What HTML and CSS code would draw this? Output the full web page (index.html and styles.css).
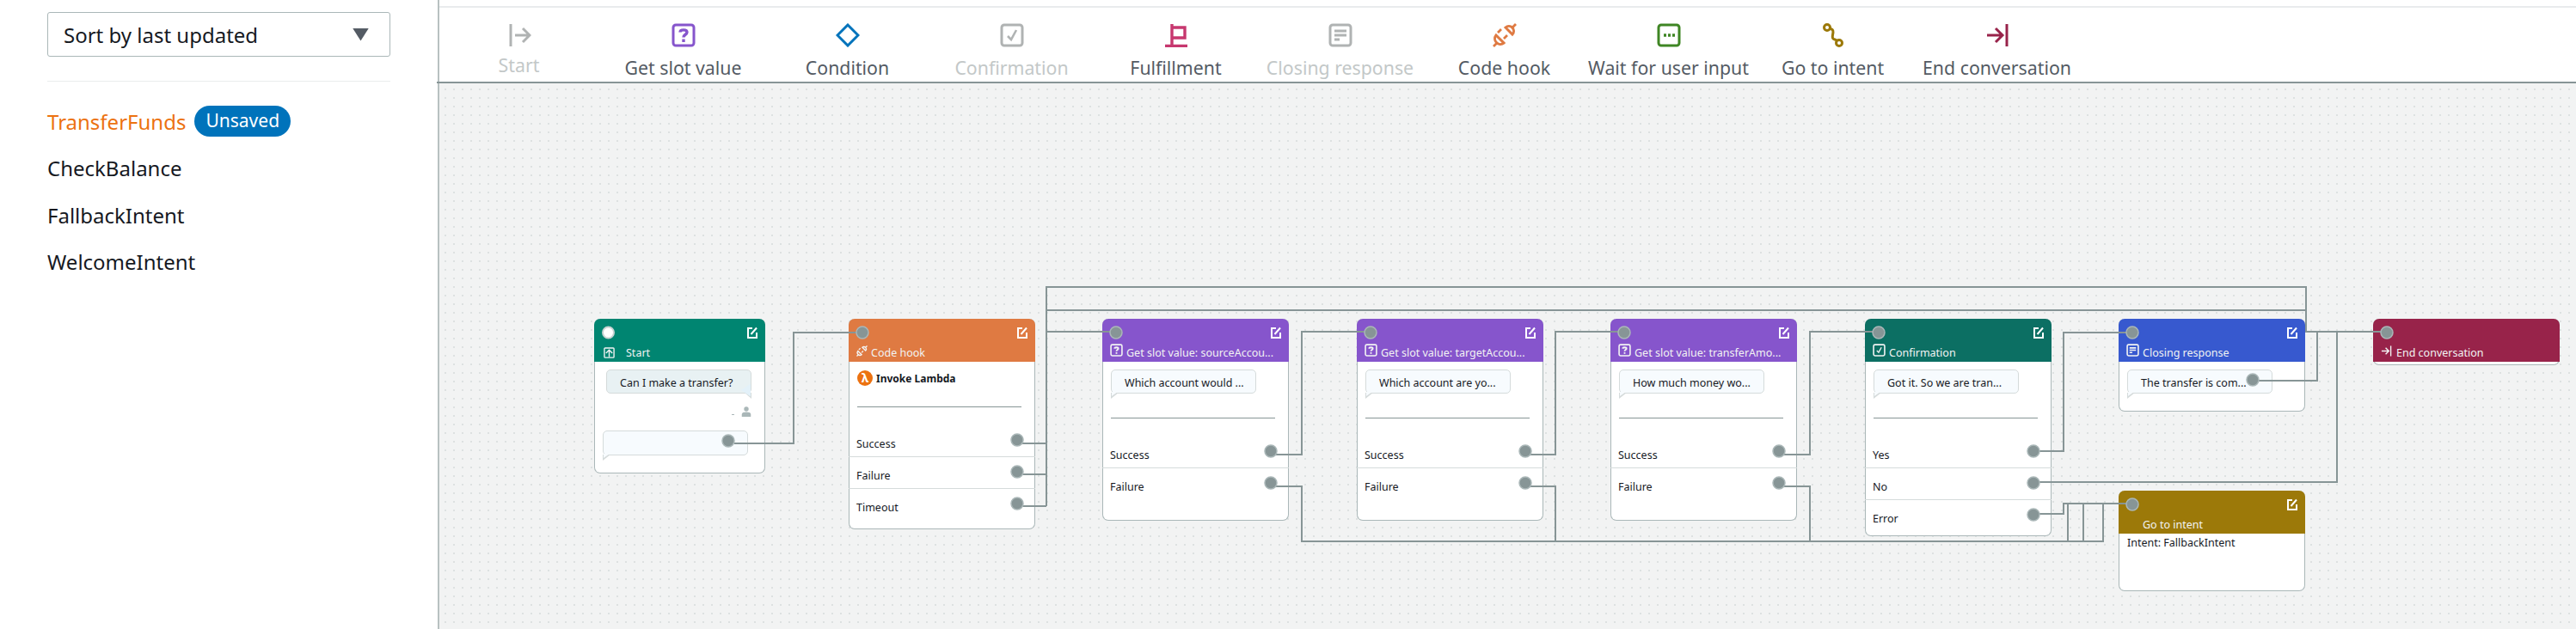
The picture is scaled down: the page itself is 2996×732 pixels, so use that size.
FILE: index.html
```html
<!DOCTYPE html>
<html lang="en">
<head>
  <meta charset="UTF-8">
  <title>Conversation flow: TransferFunds</title>
  <link rel="stylesheet" href="styles.css">
</head>
<body>
  <!-- icon sprite, everything is on a 28x28 grid -->
  <svg class="sprite" aria-hidden="true">
    <symbol id="i-start" viewBox="0 0 28 28">
      <path d="M4 1V27" stroke-width="3"/>
      <path d="M9 14H25M18 6L26 14L18 22" stroke-width="3"/>
    </symbol>
    <symbol id="i-slot" viewBox="0 0 28 28">
      <rect x="2" y="2" width="24" height="24" rx="3" stroke-width="3"/>
      <path d="M10 10.5C10 7 18 7 18 10.5C18 13.5 14 13 14 16.5" stroke-width="3.4"/>
      <path d="M14 18.5V22" stroke-width="3.4"/>
    </symbol>
    <symbol id="i-cond" viewBox="0 0 28 28">
      <path d="M14 2L26 14L14 26L2 14Z" stroke-width="3"/>
    </symbol>
    <symbol id="i-confirm" viewBox="0 0 28 28">
      <rect x="2" y="2" width="24" height="24" rx="3" stroke-width="3"/>
      <path d="M9 15L13 19L19 8" stroke-width="2.6"/>
    </symbol>
    <symbol id="i-flag" viewBox="0 0 28 28">
      <path d="M1 26.5H27M9 1V26M9 5H24V17H9" stroke-width="3.4"/>
    </symbol>
    <symbol id="i-closing" viewBox="0 0 28 28">
      <rect x="2" y="2" width="24" height="24" rx="3" stroke-width="3"/>
      <path d="M7 9H21M7 14H21M7 19H13" stroke-width="3"/>
    </symbol>
    <symbol id="i-hook" viewBox="0 0 28 28">
      <path d="M4 14L13 23A6.4 6.4 0 0 1 4 14Z" stroke-width="3"/>
      <path d="M6 11L10 7M13 18L17 14M5 23L1 27" stroke-width="2.8"/>
      <path d="M15 5L23 13A5.66 5.66 0 0 0 15 5Z" stroke-width="3"/>
      <path d="M23 5L27 1" stroke-width="2.8"/>
    </symbol>
    <symbol id="i-wait" viewBox="0 0 28 28">
      <rect x="2" y="2" width="24" height="24" rx="3" stroke-width="3"/>
      <path d="M8 14H11M13 14H16M18 14H21" stroke-width="3.4"/>
    </symbol>
    <symbol id="i-goto" viewBox="0 0 28 28">
      <circle cx="7" cy="5" r="3.5" stroke-width="3"/>
      <circle cx="21" cy="23" r="3.5" stroke-width="3"/>
      <path d="M10 6C18 8 11 15 14 18C15 19 17 19 18 20" stroke-width="3"/>
    </symbol>
    <symbol id="i-end" viewBox="0 0 28 28">
      <path d="M2 14H19M12 6L20 14L12 22" stroke-width="3"/>
      <path d="M25 1V27" stroke-width="3"/>
    </symbol>
    <symbol id="i-edit" viewBox="0 0 14 14">
      <path d="M7 2H2V13H12V7" stroke-width="2"/>
      <path d="M5.5 9L12 1.5" stroke-width="2"/>
    </symbol>
    <symbol id="i-entry" viewBox="0 0 28 28">
      <rect x="2" y="2" width="24" height="24" rx="2" stroke-width="3"/>
      <path d="M14 25V9M6 15L14 7L22 15" stroke-width="3"/>
    </symbol>
    <symbol id="i-user" viewBox="0 0 16 16">
      <circle cx="8" cy="4" r="3.6" class="fill"/>
      <path d="M1 16V12C1 9.5 4 8.5 8 8.5C12 8.5 15 9.5 15 12V16Z" class="fill"/>
    </symbol>
  </svg>

  <aside class="sidebar">
    <div class="sort-box">
      <span>Sort by last updated</span>
      <i class="caret"></i>
    </div>
    <hr class="side-rule">
    <ul class="intents">
      <li class="current">TransferFunds <span class="badge">Unsaved</span></li>
      <li>CheckBalance</li>
      <li>FallbackIntent</li>
      <li>WelcomeIntent</li>
    </ul>
  </aside>

  <main class="builder">
    <div class="top-strip"></div>
    <nav class="toolbar">
      <div class="tool off tool-start"><svg class="tool-ico c-grey"><use href="#i-start"/></svg><span>Start</span></div>
      <div class="tool"><svg class="tool-ico c-slot"><use href="#i-slot"/></svg><span>Get slot value</span></div>
      <div class="tool"><svg class="tool-ico c-cond"><use href="#i-cond"/></svg><span>Condition</span></div>
      <div class="tool off"><svg class="tool-ico c-grey"><use href="#i-confirm"/></svg><span>Confirmation</span></div>
      <div class="tool"><svg class="tool-ico c-flag"><use href="#i-flag"/></svg><span>Fulfillment</span></div>
      <div class="tool off"><svg class="tool-ico c-grey"><use href="#i-closing"/></svg><span>Closing response</span></div>
      <div class="tool"><svg class="tool-ico c-hook"><use href="#i-hook"/></svg><span>Code hook</span></div>
      <div class="tool"><svg class="tool-ico c-wait"><use href="#i-wait"/></svg><span>Wait for user input</span></div>
      <div class="tool"><svg class="tool-ico c-goto"><use href="#i-goto"/></svg><span>Go to intent</span></div>
      <div class="tool"><svg class="tool-ico c-end"><use href="#i-end"/></svg><span>End conversation</span></div>
    </nav>

    <section class="canvas">
      <div class="node n-start">
        <div class="head bg-start">
          <svg class="edit"><use href="#i-edit"/></svg>
          <div class="title"><svg class="ico ico-start"><use href="#i-entry"/></svg><span>Start</span></div>
        </div>
        <div class="body">
          <div class="bubble user">Can I make a transfer?</div>
          <div class="who"><i class="dash"></i><svg class="person"><use href="#i-user"/></svg></div>
          <div class="bubble empty"></div>
        </div>
      </div>

      <div class="node n-code">
        <div class="head bg-code">
          <svg class="edit"><use href="#i-edit"/></svg>
          <div class="title title-code"><svg class="ico ico-hook"><use href="#i-hook"/></svg><span>Code hook</span></div>
        </div>
        <div class="body">
          <div class="lambda"><b class="lambda-mark">λ</b><strong>Invoke Lambda</strong></div>
          <hr class="split split-code">
        </div>
        <div class="row">Success</div>
        <div class="row">Failure</div>
        <div class="row">Timeout</div>
      </div>

      <div class="node n-slot1">
        <div class="head bg-slot">
          <svg class="edit"><use href="#i-edit"/></svg>
          <div class="title"><svg class="ico"><use href="#i-slot"/></svg><span>Get slot value: sourceAccou...</span></div>
        </div>
        <div class="body">
          <div class="bubble">Which account would ...</div>
          <hr class="split">
        </div>
        <div class="row">Success</div>
        <div class="row">Failure</div>
      </div>

      <div class="node n-slot2">
        <div class="head bg-slot">
          <svg class="edit"><use href="#i-edit"/></svg>
          <div class="title"><svg class="ico"><use href="#i-slot"/></svg><span>Get slot value: targetAccou...</span></div>
        </div>
        <div class="body">
          <div class="bubble">Which account are yo...</div>
          <hr class="split">
        </div>
        <div class="row">Success</div>
        <div class="row">Failure</div>
      </div>

      <div class="node n-slot3">
        <div class="head bg-slot">
          <svg class="edit"><use href="#i-edit"/></svg>
          <div class="title"><svg class="ico"><use href="#i-slot"/></svg><span>Get slot value: transferAmo...</span></div>
        </div>
        <div class="body">
          <div class="bubble">How much money wo...</div>
          <hr class="split">
        </div>
        <div class="row">Success</div>
        <div class="row">Failure</div>
      </div>

      <div class="node n-confirm">
        <div class="head bg-confirm">
          <svg class="edit"><use href="#i-edit"/></svg>
          <div class="title"><svg class="ico"><use href="#i-confirm"/></svg><span>Confirmation</span></div>
        </div>
        <div class="body">
          <div class="bubble">Got it. So we are tran...</div>
          <hr class="split">
        </div>
        <div class="row">Yes</div>
        <div class="row">No</div>
        <div class="row">Error</div>
      </div>

      <div class="node n-closing">
        <div class="head bg-closing">
          <svg class="edit"><use href="#i-edit"/></svg>
          <div class="title"><svg class="ico"><use href="#i-closing"/></svg><span>Closing response</span></div>
        </div>
        <div class="body">
          <div class="bubble">The transfer is com...</div>
        </div>
      </div>

      <div class="node n-end">
        <div class="head bg-end">
          <div class="title title-end"><svg class="ico ico-end"><use href="#i-end"/></svg><span>End conversation</span></div>
        </div>
      </div>

      <div class="node n-goto">
        <div class="head bg-goto">
          <svg class="edit"><use href="#i-edit"/></svg>
          <div class="title title-plain"><span>Go to intent</span></div>
        </div>
        <div class="intent-name">Intent: FallbackIntent</div>
      </div>

      <!-- wires and ports lie over the nodes, in page coordinates -->
      <svg class="wires" viewBox="511 98 2485 634">
        <g class="lines">
          <path d="M854 517H923V388H1003"/>
          <path d="M1183 517H1217M1183 553H1217M1183 590H1217"/>
          <path d="M1217 590V335H2682V387H2776"/>
          <path d="M1217 362H2682M1217 387H1298"/>
          <path d="M1478 530H1514V387H1594M1478 567H1514V631H2446V587H2480"/>
          <path d="M1774 530H1809V387H1889M1774 567H1809V631"/>
          <path d="M2069 530H2105V387H2185M2069 567H2105V631"/>
          <path d="M2365 526H2400V388H2480"/>
          <path d="M2365 562H2718V387"/>
          <path d="M2365 599H2400V587H2446M2405 587V631M2423 587V631"/>
          <path d="M2620 444H2695V387"/>
        </g>
        <circle class="port port-start" cx="707.5" cy="388" r="6.5"/>
        <circle class="port" cx="847" cy="514" r="7"/>
        <circle class="port" cx="1003" cy="388" r="7"/>
        <circle class="port" cx="1183" cy="513" r="7"/>
        <circle class="port" cx="1183" cy="550" r="7"/>
        <circle class="port" cx="1183" cy="587" r="7"/>
        <circle class="port" cx="1298" cy="388" r="7"/>
        <circle class="port" cx="1478" cy="526" r="7"/>
        <circle class="port" cx="1478" cy="563" r="7"/>
        <circle class="port" cx="1594" cy="388" r="7"/>
        <circle class="port" cx="1774" cy="526" r="7"/>
        <circle class="port" cx="1774" cy="563" r="7"/>
        <circle class="port" cx="1889" cy="388" r="7"/>
        <circle class="port" cx="2069" cy="526" r="7"/>
        <circle class="port" cx="2069" cy="563" r="7"/>
        <circle class="port" cx="2185" cy="388" r="7"/>
        <circle class="port" cx="2365" cy="526" r="7"/>
        <circle class="port" cx="2365" cy="563" r="7"/>
        <circle class="port" cx="2365" cy="600" r="7"/>
        <circle class="port" cx="2480" cy="388" r="7"/>
        <circle class="port" cx="2620" cy="443" r="7"/>
        <circle class="port" cx="2776" cy="388" r="7"/>
        <circle class="port" cx="2480" cy="588" r="7"/>
      </svg>
    </section>
  </main>
</body>
</html>
```

FILE: styles.css
```css
html, body { margin: 0; height: 100%; overflow: hidden; }
body { display: flex; font-family: "Noto Sans", Arial, sans-serif; color: #16191f; background: #fff; }

.sprite { position: absolute; width: 0; height: 0; }
svg { fill: none; stroke: currentColor; }
svg .fill { fill: currentColor; stroke: none; }

/* sidebar */
.sidebar { width: 511px; flex: none; box-sizing: border-box; padding: 14px 55px 0; border-right: 2px solid #b8c1c1; font-size: 24px; }
.sort-box { display: flex; align-items: center; justify-content: space-between; box-sizing: border-box; height: 52px; padding: 0 24px 0 18px; border: 1px solid #aab7b8; border-radius: 3px; }
.caret { width: 19px; height: 15px; background: #545b64; clip-path: polygon(0 0, 100% 0, 50% 100%); }
.side-rule { margin: 28px 0 0; border: 0; border-top: 1px solid #eaeded; }
.intents { list-style: none; margin: 19px 0 0; padding: 0; }
.intents li { display: flex; align-items: center; height: 54.5px; }
.intents .current { color: #ec7211; }
.badge { margin-left: 10px; padding: 0 13px; height: 36px; line-height: 35px; border-radius: 18px; background: #0073bb; color: #fff; font-size: 21px; }

/* toolbar */
.builder { flex: 1; display: flex; flex-direction: column; min-width: 0; }
.top-strip { height: 7px; border-bottom: 2px solid #e9ebed; }
.toolbar { display: flex; flex: none; height: 86px; margin-left: -3px; border-bottom: 2px solid #879596; }
.tool { display: flex; flex-direction: column; align-items: center; width: 191px; flex: none; font-size: 21.3px; color: #545b64; white-space: nowrap; }
.tool.off { color: #c3c8c8; }
.tool-ico { width: 28px; height: 28px; margin-top: 18px; margin-bottom: 9px; }
.tool-start .tool-ico { margin-bottom: 6px; }
.tool span { line-height: 30px; }
.c-grey { color: #b0b3b3; }
.c-slot { color: #8655cc; }
.c-cond { color: #0073bb; }
.c-flag { color: #c7386f; }
.c-hook { color: #df7a42; }
.c-wait { color: #3f8624; }
.c-goto { color: #9c7909; }
.c-end { color: #98234a; }

/* canvas */
.canvas { flex: 1; position: relative; background-color: #f2f3f3; background-image: radial-gradient(circle, #dde1e1 1px, transparent 1.3px); background-size: 10px 10px; background-position: 2px 2px; }
.wires { position: absolute; left: 0; top: 0; width: 2485px; height: 634px; stroke: none; }
.lines path { fill: none; stroke: #879596; stroke-width: 2; }
.port { fill: #879596; stroke: #aab7b8; stroke-width: 1.5; }
.port-start { fill: #fff; stroke: #c9d3d3; stroke-width: 2; }

.node { position: absolute; top: 274px; width: 217px; box-sizing: border-box; background: #fff; border: 1px solid #aab7b8; border-top: 0; border-radius: 7px; font-size: 12.5px; }
.n-start { left: 180px; width: 199px; height: 180px; }
.n-code { left: 476px; height: 245px; }
.n-slot1 { left: 771px; height: 235px; }
.n-slot2 { left: 1067px; height: 235px; }
.n-slot3 { left: 1362px; height: 235px; }
.n-confirm { left: 1658px; height: 253px; }
.n-closing { left: 1953px; height: 108px; }
.n-end { left: 2249px; height: 54px; }
.n-goto { left: 1953px; top: 474px; height: 117px; }

.head { position: relative; height: 50px; margin: 0 -1px; border-radius: 7px 7px 0 0; color: #fff; }
.bg-start { background: #008571; }
.bg-code { background: #df7a42; }
.bg-slot { background: #8655cc; }
.bg-confirm { background: #0c6f63; }
.bg-closing { background: #3759cf; }
.bg-end { background: #98234a; }
.bg-goto { background: #9c7909; }
.edit { position: absolute; top: 9px; right: 8px; width: 14px; height: 14px; }
.title { position: absolute; left: 9px; right: 4px; top: 30px; display: flex; align-items: center; gap: 4px; height: 20px; white-space: nowrap; line-height: 20px; color: #f2f3f3; }
.ico { flex: none; width: 15px; height: 15px; margin-top: -8px; }
.ico-start { width: 13px; height: 13px; margin: -1px 9px 0 2px; }
.ico-hook { width: 13px; height: 13px; margin-top: -5px; }
.ico-end { width: 13px; height: 13px; margin-top: -6px; }
.title-code { gap: 4px; }
.title-end { gap: 5px; }
.title-plain { left: 28px; }

.body { padding: 9px 9px 0; }
.n-start .body { padding-left: 13px; }
.bubble { position: relative; box-sizing: border-box; width: 169px; height: 28px; padding-left: 15px; line-height: 29px; background: #f7fbfe; border: 1px solid #d5dbdb; border-radius: 5px; white-space: nowrap; }
.bubble::before { content: ""; position: absolute; left: -1px; top: 100%; width: 9px; height: 7px; background: #d5dbdb; clip-path: polygon(0 0, 100% 0, 0 100%); }
.bubble::after { content: ""; position: absolute; left: 0; top: calc(100% - 1px); width: 7px; height: 5px; background: #f7fbfe; clip-path: polygon(0 0, 100% 0, 0 100%); }
.user { background: #e8f1f3; }
.user::before { left: auto; right: -1px; top: 100%; width: 8px; height: 7px; background: #d5dbdb; clip-path: polygon(100% 0, 0 0, 100% 100%); }
.user::after { left: auto; right: 0; top: 60%; width: 11px; height: 15px; background: #e3f1f9; clip-path: polygon(100% 0, 100% 100%, 0 50%); }
.who { display: flex; justify-content: flex-end; align-items: flex-end; gap: 8px; width: 169px; height: 16px; margin-top: 12px; color: #aab7b8; }
.person { width: 12px; height: 14px; }
.dash { width: 3px; height: 1px; margin-bottom: 3px; background: #aab7b8; }
.empty { width: 169px; margin: 15px 0 0 -4px; height: 29px; }

.lambda { display: flex; align-items: center; gap: 4px; height: 20px; }
.lambda strong { font-size: 12px; }
.lambda-mark { display: block; width: 18px; height: 18px; line-height: 18px; text-align: center; border-radius: 50%; background: #ec7211; color: #fff; font-size: 14px; }
.split { margin: 28px 0 21px; width: 191px; border: 0; border-top: 1px solid #879596; }
.split-code { margin-top: 23px; }
.row { box-sizing: border-box; height: 37px; margin: 0 -1px; padding: 12px 9px 0; line-height: 20px; border-bottom: 1px solid #d5dbdb; }
.row:last-child { border-bottom: 0; }
.intent-name { padding-left: 9px; line-height: 22px; }
```
